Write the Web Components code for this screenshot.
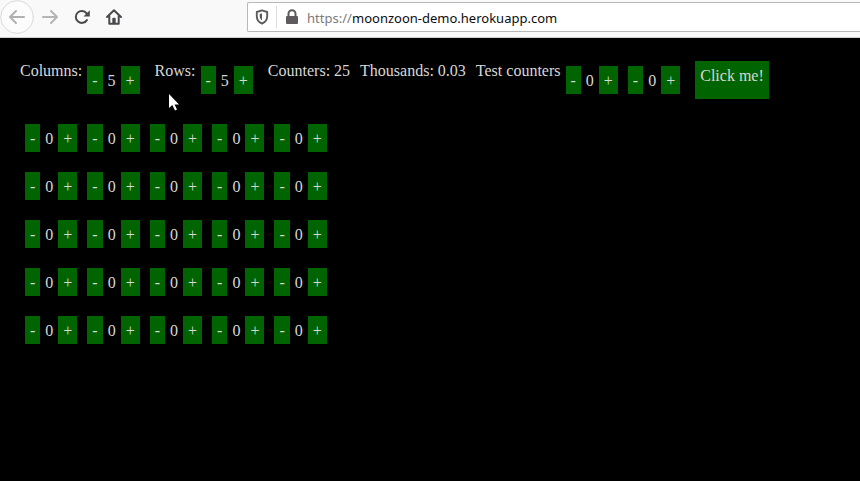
<!DOCTYPE html>
<html lang="en">
<head>
<meta charset="utf-8">
<title>MoonZoon</title>
<style>
html, body { margin: 0; height: 100%; background: #000; overflow: hidden; }
</style>
</head>
<body>
<demo-window></demo-window>
<script>
class Base extends HTMLElement {
  connectedCallback() {
    if (this.shadowRoot) return;
    const t = document.createElement('template');
    t.innerHTML = this.render();
    this.attachShadow({ mode: 'open' }).appendChild(t.content.cloneNode(true));
  }
}

customElements.define('action-button', class extends Base {
  render() {
    return `<style>
      :host { display: block; box-sizing: border-box; height: 28px; padding: 6px 5px 4px; background: #006400; line-height: 18px; white-space: pre; }
      :host([large]) { height: 38px; }
    </style><slot></slot>`;
  }
});

customElements.define('step-counter', class extends Base {
  render() {
    return `<style>
      :host { display: flex; gap: 5px; line-height: 18px; }
      span { padding: 6px 0 4px; }
    </style>
    <action-button>-</action-button><span><slot></slot></span><action-button>+</action-button>`;
  }
});

customElements.define('control-bar', class extends Base {
  render() {
    return `<style>
      :host { display: flex; align-items: flex-start; gap: 10px; padding-left: 20px; height: 38px; line-height: 18px; white-space: nowrap; }
      .group { display: flex; gap: 5px; padding-right: 5px; }
      .group, .text { margin-top: 1px; }
      step-counter { margin-top: 4px; }
      .pair { display: flex; gap: 10px; }
    </style>
    <div class="group"><span>Columns:</span><step-counter>5</step-counter></div>
    <div class="group"><span>Rows:</span><step-counter>5</step-counter></div>
    <div class="text">Counters: 25</div>
    <div class="text">Thousands: 0.03</div>
    <div class="group"><span>Test counters</span><div class="pair"><step-counter>0</step-counter><step-counter>0</step-counter></div></div>
    <action-button large>Click me!</action-button>`;
  }
});

customElements.define('counter-grid', class extends Base {
  render() {
    const row = `<div>${'<step-counter>0</step-counter>'.repeat(5)}</div>`;
    return `<style>
      :host { display: flex; flex-direction: column; gap: 20px; padding: 25px 0 0 25px; }
      div { display: flex; gap: 10px; }
    </style>${row.repeat(5)}`;
  }
});

customElements.define('address-field', class extends Base {
  render() {
    return `<style>
      :host { display: flex; align-items: center; box-sizing: border-box; height: 30px; border: 1px solid #b8b8ba; border-right: 0; border-radius: 2px 0 0 2px; background: #fff; padding-left: 7px; font: 13px/20px "Noto Sans", sans-serif; color: #0c0c0d; }
      svg { display: block; flex: none; }
      i { width: 1px; height: 22px; margin: 0 8px 0 7px; background: #dcdcde; }
      .url { margin-left: 8px; padding-top: 2px; white-space: nowrap; display: flex; }
      .scheme { color: #7b7b7c; width: 45px; }
    </style>
    <svg width="14" height="16" viewBox="0 0 14 16" fill="none" stroke="#5c5c60"><path d="M7 1.3 12.2 3v4.2c0 3.6-2.3 6.2-5.2 7.3-2.9-1.1-5.2-3.7-5.2-7.3V3z" stroke-width="1.9" stroke-linejoin="round"/><path d="M7 4.2v7.2C5.4 10.300 4.700 9 4.700 7.200V4.900z" fill="#5c5c60" stroke="none"/></svg>
    <i></i>
    <svg width="14" height="16" viewBox="0 0 14 16"><path d="M3.500 7.500V4.800a3.500 3.500 0 0 1 7 0v2.700" fill="none" stroke="#5e5a5e" stroke-width="2"/><rect x="1" y="7" width="12" height="8" rx="1" fill="#5e5a5e"/></svg>
    <div class="url"><span class="scheme">https://</span><span>moonzoon-demo.herokuapp.com</span></div>`;
  }
});

customElements.define('browser-bar', class extends Base {
  render() {
    return `<style>
      :host { display: grid; grid-template-columns: 247px 1fr; box-sizing: border-box; height: 38px; padding-top: 2px; background: #f9f9fa; border-bottom: 1px solid #cfcfd1; overflow: hidden; }
      nav { margin-top: -2px; height: 34px; display: flex; align-items: center; }
      svg { display: block; }
    </style>
    <nav>
      <svg width="140" height="34" viewBox="0 0 140 34" fill="none" stroke-width="2" stroke-linecap="round" stroke-linejoin="round">
        <circle cx="17" cy="17" r="16.300" fill="#fcfcfd" stroke="#dadadb" stroke-width="1"/>
        <path d="M10 17H24M16 11l-6 6 6 6" stroke="#b0b0b1"/>
        <path d="M43 17H57M51 11l6 6-6 6" stroke="#b5b5b6"/>
        <path d="M86.900 20.100A6 6 0 1 1 86.600 13.300" stroke="#4a4a4d"/>
        <path d="M89.800 10.200v6.300h-6.300z" fill="#4a4a4d" stroke="none"/>
        <path d="M107 17l7-6.800 7 6.800M109.300 16v7.800h9.400V16" stroke="#4a4a4d"/>
        <path d="M112.300 24v-5.200a1 1 0 0 1 1-1h1.400a1 1 0 0 1 1 1V24z" fill="#4a4a4d" stroke="none"/>
      </svg>
    </nav>
    <address-field></address-field>`;
  }
});

customElements.define('mouse-pointer', class extends Base {
  render() {
    return `<style>:host { display: block; width: 12px; height: 18px; } svg { display: block; }</style>
    <svg width="12" height="18" viewBox="0 0 12 18"><path d="M0 0v14l3.300-3 2.700 5.600 2-1-2.400-5.100H10z" fill="#fff"/></svg>`;
  }
});

customElements.define('demo-window', class extends Base {
  render() {
    return `<style>
      :host { display: block; position: relative; height: 100%; background: #000; }
      main { padding-top: 23px; font: 16px "Liberation Serif", "Times New Roman", serif; color: #d8d8d8; }
      mouse-pointer { position: absolute; left: 169px; top: 94px; }
    </style>
    <browser-bar></browser-bar>
    <main><control-bar></control-bar><counter-grid></counter-grid></main>
    <mouse-pointer></mouse-pointer>`;
  }
});
</script>
</body>
</html>
